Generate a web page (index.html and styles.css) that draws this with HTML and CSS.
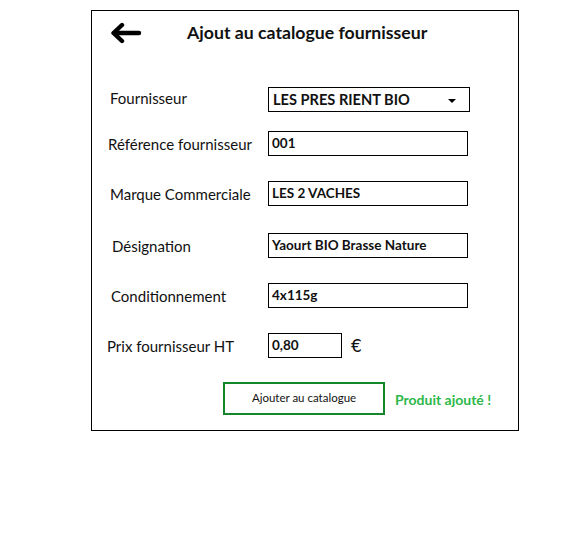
FILE: index.html
```html
<!DOCTYPE html>
<html lang="fr">
<head>
<meta charset="utf-8">
<link rel="stylesheet" href="styles.css">
</head>
<body>
<div class="card">
  <div class="header">
    <svg class="back" width="32" height="22" viewBox="0 0 32 22">
      <path d="M29 11 H5 M12 3 L3.5 11 L12 19" fill="none" stroke="#000" stroke-width="4.4" stroke-linecap="round" stroke-linejoin="round"/>
    </svg>
    <h1 class="title">Ajout au catalogue fournisseur</h1>
  </div>
  <div class="form">
    <div class="row r1">
      <span class="label l1 up">Fournisseur</span>
      <div class="field select"><span>LES PRES RIENT BIO</span><span class="caret"></span></div>
    </div>
    <div class="row r2">
      <span class="label l2">Référence fournisseur</span>
      <div class="field">001</div>
    </div>
    <div class="row r3">
      <span class="label l1">Marque Commerciale</span>
      <div class="field">LES 2 VACHES</div>
    </div>
    <div class="row r4">
      <span class="label l3">Désignation</span>
      <div class="field">Yaourt BIO Brasse Nature</div>
    </div>
    <div class="row r5">
      <span class="label l4">Conditionnement</span>
      <div class="field">4x115g</div>
    </div>
    <div class="row r5">
      <span class="label l5">Prix fournisseur HT</span>
      <div class="field small">0,80</div>
      <span class="euro">€</span>
    </div>
    <div class="actions">
      <button class="btn">Ajouter au catalogue</button>
      <span class="ok">Produit ajouté !</span>
    </div>
  </div>
</div>
</body>
</html>
```
FILE: styles.css
```css
* { box-sizing: border-box; }
body {
  margin: 0;
  background: #fff;
  font-family: Lato, "Noto Sans", sans-serif;
  color: #111;
}
.card {
  margin: 10px 0 0 91px;
  width: 428px;
  height: 421px;
  border: 1px solid #000;
}
.header {
  display: flex;
  align-items: center;
  height: 42px;
  padding: 1px 0 0 18px;
}
.back { display: block; }
.title {
  margin: 0 0 0 45px;
  font-size: 17.7px;
  font-weight: 700;
}
.form {
  padding: 34px 0 0 0;
}
.row {
  display: flex;
  align-items: center;
  height: 25px;
}
.r2 { margin-top: 19px; }
.r3 { margin-top: 25px; }
.r4 { margin-top: 27px; }
.r5 { margin-top: 25px; }
.label {
  width: 176px;
  font-size: 15px;
  padding-left: 18px;
}
.up { padding-bottom: 3px; }
.l2 { padding-left: 16px; }
.l3 { padding-left: 20px; }
.l4 { padding-left: 19px; }
.l5 { padding-left: 15px; }
.field {
  width: 200px;
  height: 25px;
  border: 1px solid #000;
  font-size: 13.5px;
  font-weight: 700;
  padding: 0 0 1px 3px;
  display: flex;
  align-items: center;
}
.select {
  width: 202px;
  justify-content: space-between;
  padding: 0 13px 0 4px;
  font-size: 14.6px;
}
.caret {
  width: 0;
  height: 0;
  border-left: 4px solid transparent;
  border-right: 4px solid transparent;
  border-top: 4px solid #000;
  margin-top: 3px;
}
.small { width: 74px; }
.euro {
  margin-left: 9px;
  font-size: 17px;
  font-family: "DejaVu Sans", sans-serif;
}
.actions {
  display: flex;
  align-items: center;
  margin: 24px 0 0 131px;
}
.btn {
  width: 162px;
  height: 33px;
  border: 2px solid #12872a;
  background: #fff;
  font-family: inherit;
  font-size: 11.5px;
  color: #111;
  padding: 0 0 2px;
}
.ok {
  margin-left: 10px;
  color: #2db84a;
  font-weight: 700;
  font-size: 14px;
  padding-top: 2px;
}
```
